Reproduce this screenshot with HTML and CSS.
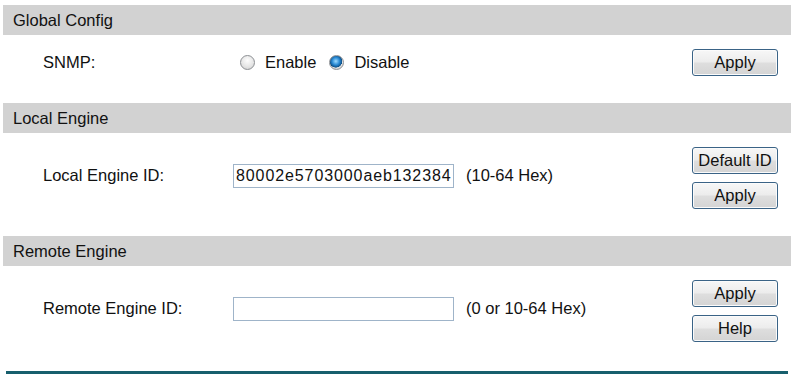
FILE: index.html
```html
<!DOCTYPE html>
<html>
<head>
    <meta charset="utf-8" />
    <title>SNMP Engine</title>
    <link rel="stylesheet" href="styles.css">
</head>
<body>
    <div class="panel">
        <section class="block">
            <h2 class="bar">Global Config</h2>
            <div class="row">
                <span class="label">SNMP:</span>
                <div class="field radios">
                    <label class="opt"><input type="radio" name="snmp"> Enable</label>
                    <label class="opt"><input type="radio" name="snmp" checked> Disable</label>
                </div>
                <div class="actions">
                    <button class="btn">Apply</button>
                </div>
            </div>
        </section>
        <section class="block">
            <h2 class="bar">Local Engine</h2>
            <div class="row tall">
                <span class="label">Local Engine ID:</span>
                <div class="field">
                    <input class="text" type="text" value="80002e5703000aeb132384">
                    <span class="hint">(10-64 Hex)</span>
                </div>
                <div class="actions">
                    <button class="btn">Default ID</button>
                    <button class="btn">Apply</button>
                </div>
            </div>
        </section>
        <section class="block">
            <h2 class="bar">Remote Engine</h2>
            <div class="row tall">
                <span class="label">Remote Engine ID:</span>
                <div class="field">
                    <input class="text" type="text" value="">
                    <span class="hint">(0 or 10-64 Hex)</span>
                </div>
                <div class="actions">
                    <button class="btn">Apply</button>
                    <button class="btn">Help</button>
                </div>
            </div>
        </section>
        <hr class="rule">
    </div>
</body>
</html>
```

FILE: styles.css
```css
body {
    margin: 0;
    background: #fff;
    font-family: "Liberation Sans", Arial, sans-serif;
    font-size: 16.5px;
    color: #111;
}
.panel {
    width: 788px;
    margin: 5px 0 0 3px;
}
.bar {
    margin: 0;
    height: 30px;
    line-height: 30px;
    padding-left: 10px;
    background: #d2d2d2;
    font-size: 16.5px;
    font-weight: normal;
}
.row {
    display: grid;
    grid-template-columns: 230px 1fr 86px;
    align-items: center;
    padding: 14px 13px 27px 0;
}
.tall .label,
.tall .field {
    margin-bottom: 5px;
}
.label {
    padding-left: 40px;
}
.field {
    display: flex;
    align-items: center;
}
.radios {
    padding-left: 7px;
}
.opt {
    display: flex;
    align-items: center;
    margin-right: 13px;
}
.opt input {
    appearance: none;
    box-sizing: border-box;
    width: 15px;
    height: 15px;
    margin: 0 10px 0 0;
    border: 1px solid #8c8f93;
    border-radius: 50%;
    background: radial-gradient(circle at 50% 35%, #fdfdfd 0, #e4e4e4 60%, #cbcbcb 100%);
}
.opt input:checked {
    background:
        radial-gradient(circle at 45% 40%, #9fdcff 0, #2a8ad4 35%, #0d4f86 58%, transparent 62%),
        radial-gradient(circle at 50% 35%, #fdfdfd 0, #e4e4e4 60%, #cbcbcb 100%);
}
.text {
    box-sizing: border-box;
    width: 221px;
    height: 24px;
    padding: 0 2px;
    border: 1px solid #9fb4c9;
    font-family: "Liberation Sans", Arial, sans-serif;
    font-size: 16px;
    letter-spacing: 0.9px;
    color: #111;
}
.hint {
    margin-left: 12px;
}
.actions {
    display: flex;
    flex-direction: column;
    gap: 8px;
}
.btn {
    height: 27px;
    width: 86px;
    padding: 0;
    border: 1px solid #3a6386;
    border-radius: 3px;
    background: linear-gradient(#f7f7f7, #ececec 48%, #dedede 52%, #d4d4d4);
    box-shadow: inset 0 0 0 1px #fbfbfb;
    font-family: "Liberation Sans", Arial, sans-serif;
    font-size: 16.5px;
    color: #111;
}
.rule {
    margin: 2px 3px 0;
    height: 3px;
    border: 0;
    background: #175f6d;
}
```
